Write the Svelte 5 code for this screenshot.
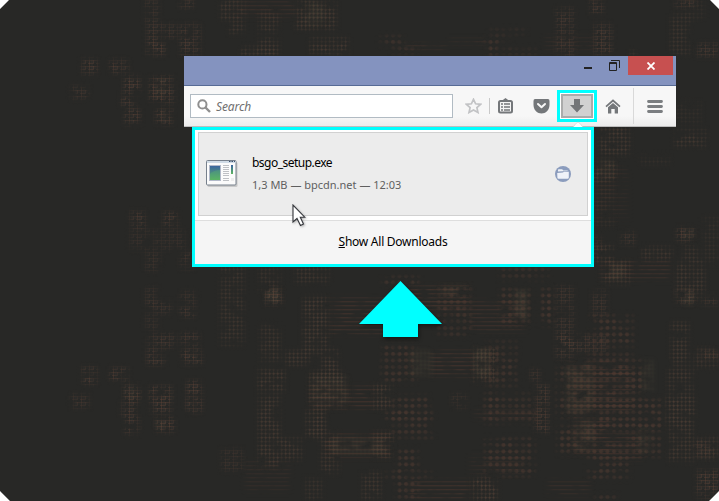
<script>
  // Each patch: x, y, width, height, opacity
  const mesh = [
    [82,59,15,15,.75],[110,60,18,13,.75],[124,76,16,18,.8],[71,86,18,13,.5],[121,92,14,14,.7],[125,109,15,16,.8],
    [150,77,24,26,.8],[156,109,17,15,.85],[145,0,14,23,.5],[180,0,13,8,.8],[147,24,29,14,.6],[147,39,18,16,.8],[180,24,20,31,.7],
    [130,211,15,18,.7],[163,212,15,15,.7],[130,230,55,20,.35],[145,252,15,19,.4],[180,252,14,17,.5],
    [145,287,13,18,.4],[147,301,25,13,.45],[180,291,16,12,.4],[180,304,15,13,.7],[145,316,13,14,.4],
    [147,334,28,14,.6],[147,350,18,15,.7],[181,333,18,14,.65],[182,350,20,14,.8],
    [82,367,15,17,.75],[110,368,18,13,.75],[71,394,18,14,.5],[124,385,16,18,.8],[121,402,14,14,.7],[125,417,14,17,.8],
    [150,386,22,26,.8],[156,417,18,15,.85],[186,381,16,31,.75],[221,449,22,22,.4],
    [265,289,17,16,.9],[556,286,18,73,.5],[592,290,15,27,.5],[535,385,14,48,.7],[557,335,50,17,.6],
    [530,369,10,12,.5],[452,394,15,14,.5],[676,290,19,14,.8],[697,470,22,28,.8],[702,295,17,10,.5],
    [677,227,17,14,.8],[621,232,14,13,.55],[590,0,13,15,.7],[594,24,18,30,.7],[697,43,22,14,.6],
    [675,0,20,7,.7],[590,237,13,14,.4],[694,440,20,17,.5],[697,350,22,10,.5],[556,8,18,48,.6]
  ];
  const fine = [
    [220,262,24,84,.55],[259,267,22,25,.5],[295,260,34,23,.6],[303,297,25,56,.75],[260,324,20,38,.6],
    [258,369,27,22,.75],[285,350,25,16,.65],[320,349,18,30,.75],[309,372,36,36,.8],[258,395,22,72,.7],[280,438,22,22,.7],
    [306,409,20,29,.8],[321,432,18,42,.7],[362,472,19,28,.6],[305,478,18,23,.45],
    [671,322,18,45,.65],[694,348,24,20,.5],[668,369,26,22,.65],[669,394,24,69,.65],[697,437,21,22,.65],[665,396,30,27,.5],
    [670,14,20,41,.5],[686,0,18,20,.3],[676,101,25,23,.3],[675,130,32,17,.65],[600,127,30,28,.75],[683,245,15,15,.5],
    [593,245,20,17,.75],[642,247,30,13,.65],[592,161,24,21,.85],[640,155,30,10,.3],[594,185,20,42,.35],
    [676,260,29,38,.65],[603,260,27,24,.8],[373,384,20,25,.8],[373,432,20,26,.8],[473,348,25,34,.85],[472,477,25,24,.9],
    [703,217,16,50,.35],[220,0,25,20,.7],[229,22,15,12,.6],[259,12,20,43,.6],[296,0,40,30,.75],[241,47,34,9,.7],[310,38,38,18,.75],[630,51,5,5,.8]
  ];
  const dots = [
    [382,277,37,7,.8],[382,345,34,37,.75],[391,396,38,36,.7],[384,412,49,8,.7],[396,422,26,10,.7],[396,434,37,4,.8],
    [396,448,22,52,.7],[383,472,49,6,.7],[500,288,18,37,.75],[519,290,12,34,.75],[541,288,12,37,.85],[437,286,34,50,.65],
    [485,341,32,45,.65],[484,392,19,31,.8],[505,393,31,30,.55],[485,438,50,38,.75],[590,315,43,32,.75],[589,353,43,24,.7],
    [590,400,42,31,.8],[612,360,32,42,.8],[628,399,34,30,.8],[557,365,54,52,.7],[588,443,41,36,.7],[595,495,23,6,.7],
    [380,36,24,10,.6],[392,47,26,6,.5],[484,37,26,5,.8],[490,29,36,5,.5],[488,43,9,12,.8],[502,48,34,6,.5],[500,267,48,13,.5],[558,425,40,29,.75],[628,425,33,32,.7]
  ];
  const lines = [
    [600,260,70,20,.6],[330,297,60,38,.7],[310,385,64,24,.7],[326,433,65,25,.75],[409,285,60,27,.8],[430,350,45,27,.7],
    [470,300,55,32,.6],[475,410,63,9,.5],[570,360,62,52,.75],[572,418,38,36,.8],[602,433,40,27,.6],[470,455,54,20,.3],
    [548,480,42,16,.45],[410,480,60,20,.7],[245,460,45,32,.35],[406,44,40,5,.7],[450,39,35,5,.6],[235,0,60,18,.5],[545,35,50,16,.3],[594,167,34,55,.3]
  ];
  const glow = [
    [266,289,14,14,.5],[312,376,36,30,.3],[331,438,56,16,.4],[410,350,22,26,.4],[440,286,26,10,.3],[515,288,12,32,.5],
    [565,364,28,50,.4],[574,420,20,30,.4],[642,360,12,34,.4],[638,428,14,24,.4],[609,263,15,17,.4],[474,348,16,28,.5],
    [682,291,11,13,.5],[598,160,16,18,.3],[156,79,10,17,.3],[160,112,9,9,.4],[127,386,9,12,.3],[156,420,11,9,.3],[684,229,9,10,.4],[306,3,18,22,.35]
  ];
  const layers = [
    ['mesh', mesh], ['fine', fine], ['dots', dots], ['lines', lines], ['glow', glow]
  ];
</script>

<div class="stage">
  <svg class="texture" width="719" height="501" aria-hidden="true">
    <defs>
      <filter id="soft" x="0" y="0" width="719" height="501" filterUnits="userSpaceOnUse" color-interpolation-filters="sRGB">
        <feGaussianBlur in="SourceGraphic" stdDeviation="2.8" result="blur" />
        <feTurbulence type="fractalNoise" baseFrequency=".07 .1" numOctaves="2" seed="6" />
        <feColorMatrix values="0 0 0 0 1  0 0 0 0 1  0 0 0 0 1  3 0 0 0 -.65" result="noise" />
        <feComposite in="blur" in2="noise" operator="in" />
      </filter>
      <pattern id="p-mesh" width="8" height="6" patternUnits="userSpaceOnUse"><path d="M0 .5H8M0 3.5H5M1.5 0V6M5.5 0V4" stroke="#6b483b" stroke-opacity=".48" /><path d="M0 2h8M4 0v6" stroke="#51453b" stroke-opacity=".35" /></pattern>
      <pattern id="p-fine" width="4" height="4" patternUnits="userSpaceOnUse"><path d="M0 1.5H4M1.5 0V4" stroke="#5b4b3d" stroke-opacity=".28" /><rect x=".7" y=".7" width="2" height="2" fill="#5b4035" fill-opacity=".62" /></pattern>
      <pattern id="p-dots" width="6.5" height="6.5" patternUnits="userSpaceOnUse"><circle cx="3" cy="3" r="2" fill="#48362f" /><path d="M0 3H6.5" stroke="#4b382f" stroke-opacity=".3" /></pattern>
      <pattern id="p-lines" width="9" height="4" patternUnits="userSpaceOnUse"><path d="M0 1.5H9" stroke="#55392f" stroke-opacity=".65" /><path d="M0 2.5H9" stroke="#483a30" stroke-opacity=".35" /></pattern>
      <pattern id="p-glow" width="4" height="4" patternUnits="userSpaceOnUse"><path d="M0 0H4V4H0Z" fill="#5b4d40" fill-opacity=".3" /><path d="M0 1H4M1 0V4" stroke="#626249" stroke-opacity=".25" /></pattern>
      {#each layers as [name, patches]}
        <mask id="m-{name}" maskUnits="userSpaceOnUse" x="0" y="0" width="719" height="501">
          <g filter="url(#soft)">
            {#each patches as [x, y, w, h, o]}
              <rect {x} {y} width={w} height={h} fill="#fff" opacity={o} />
            {/each}
          </g>
        </mask>
      {/each}
    </defs>
    <rect width="719" height="501" fill="#282826" />
    {#each layers as [name]}
      <rect width="719" height="501" fill="url(#p-{name})" mask="url(#m-{name})" />
    {/each}
    <path d="M0 0H9L0 9ZM719 0H710L719 9ZM0 501V491L10 501ZM719 501V491L709 501Z" fill="#fff" />
  </svg>

  <div class="window">
    <div class="titlebar">
      <svg class="min" width="8" height="2"><path d="M0 0H8V2H0Z" fill="#222" /></svg>
      <svg class="restore" width="11" height="11" fill="none" stroke="#222"><path d="M2 .5H10.5V8M.5 2.5H7.5V10.5H.5ZM.5 3.5H7.5" /></svg>
      <div class="close"><svg width="8" height="8"><path d="M.5 .5L7.5 7.5M7.5 .5L.5 7.5" stroke="#fff" stroke-width="1.8" /></svg></div>
    </div>
    <div class="toolbar">
      <div class="search">
        <svg width="15" height="15" fill="none" stroke="#8f8f8f"><circle cx="5.4" cy="5.4" r="4.1" stroke-width="2" /><path d="M8.5 8.5L13 13" stroke-width="2.4" /></svg>
        <span>Search</span>
      </div>
      <svg class="star" width="17" height="16"><path d="M8.5 1.3L10.6 5.8L15.6 6.3L11.9 9.6L13 14.5L8.5 12L4 14.5L5.1 9.6L1.4 6.3L6.4 5.8Z" fill="none" stroke="#c2c3c5" stroke-width="1.7" /></svg>
      <i class="short"></i>
      <svg class="list" width="15" height="16"><path d="M3.5 3L7.5 0L11.5 3Z" fill="#74777a" /><rect x="1" y="3" width="13" height="11.5" rx="1.5" fill="#f5f5f5" stroke="#74777a" stroke-width="2" /><path d="M3 6H5M6 6H12M3 9H5M6 9H12M3 12H5M6 12H12" stroke="#74777a" stroke-width="1.3" /></svg>
      <svg class="pocket" width="17" height="15"><path d="M2 0H15Q16.5 0 16.5 2V6C16.5 11 12.5 14.5 8.5 14.5S.5 11 .5 6V2Q.5 0 2 0Z" fill="#74777a" /><path d="M5 5L8.5 8.3L12 5" fill="none" stroke="#f8f8f8" stroke-width="2" stroke-linecap="round" stroke-linejoin="round" /></svg>
      <div class="mark"><div class="dl"><svg width="14" height="14"><path d="M4 0H10V6H14L7 13.5L0 6H4Z" fill="#737577" /></svg></div></div>
      <svg class="home" width="16" height="15"><path d="M1 7.6L8 1.5L15 7.6" fill="none" stroke="#74777a" stroke-width="1.7" /><path d="M3 8.3L8 4L13 8.3V14.5H9.7V10H6.3V14.5H3Z" fill="#74777a" /></svg>
      <i class="long"></i>
      <svg class="menu" width="16" height="13"><path d="M1.5 1.5H14.5M1.5 6.5H14.5M1.5 11.5H14.5" stroke="#7b7e81" stroke-width="2.8" stroke-linecap="round" /></svg>
    </div>
  </div>

  <div class="panel">
    <svg class="caret" width="20" height="9"><path d="M2 9C5 8 7 2 10 1C13 2 15 8 18 9Z" fill="#fff" stroke="#ccc" stroke-width=".6" /></svg>
    <div class="item">
      <svg class="file" width="32" height="28">
        <rect x="1.5" y="2" width="30" height="25" rx="1.5" fill="#777" opacity=".3" />
        <rect x=".5" y=".5" width="29.5" height="24.5" rx="1" fill="#fbfbfb" stroke="#77808c" />
        <path d="M1 1H29.5V3H1Z" fill="#d0dbe6" />
        <path d="M23 1.5H24.5M25.5 1.5H27M28 1.5H29" stroke="#3c526d" />
        <rect x="3.5" y="5.5" width="11" height="15" fill="url(#pic)" stroke="#b2b9c9" />
        <path d="M4 14Q8 10 14 10V20H4Z" fill="#5ab86b" opacity=".35" />
        <path d="M17 5.5H23M17 7.5H23M17 9.5H23M17 11.5H23M17 13.5H23M17 15.5H23M17 18.5H23M17 20.5H23" stroke="#bfc1c5" />
        <path d="M25 5H27V14H25Z" fill="url(#pic)" />
        <path d="M25 18H28V21H25Z" fill="#eeeeee" />
        <defs><linearGradient id="pic" x2="0" y2="1"><stop stop-color="#3b64a2" /><stop offset="1" stop-color="#5db65e" /></linearGradient></defs>
      </svg>
      <div class="info"><div class="name">bsgo_setup.exe</div><div class="meta">1,3 MB — bpcdn.net — 12:03</div></div>
      <svg class="folder" width="16" height="16"><circle cx="8" cy="8" r="8" fill="#8b9cbd" /><path d="M3 5.6V3.8Q3 3.2 3.6 3.2H7.2L8.3 4.4H12.2Q13 4.4 13 5Z" fill="#eef1f6" /><path d="M2.2 7L7.8 6.6L9.2 5.8H13.8V11.8Q13.6 12.8 12.6 12.8H3.4Q2.5 12.8 2.4 11.8Z" fill="#eff2f9" /></svg>
    </div>
    <div class="footer"><span><u>S</u>how All Downloads</span></div>
  </div>

  <svg class="arrow" width="83" height="57" viewBox="0 0 83 57"><path d="M41.5 0L83 43H59V56H24V43H0Z" fill="#0ff" /></svg>
  <svg class="cursor" width="14" height="23"><path d="M1 1V18L5 14.5L8.5 21.5L11.5 20L8.3 13.2H12.8Z" fill="#fff" stroke="#34363b" stroke-width="1.1" /></svg>
</div>

<style>
  :global(body) { margin: 0; }
  .stage { position: relative; box-sizing: border-box; width: 719px; height: 501px; padding: 56px 43px 0 184px; overflow: hidden; font: 12px "Noto Sans", "Open Sans", sans-serif; }
  .stage svg { display: block; flex: none; }
  .texture { position: absolute; inset: 0; }
  .window { position: relative; width: 492px; }
  .titlebar { box-sizing: border-box; height: 30px; display: flex; justify-content: flex-end; align-items: flex-start; padding-right: 3px; background: #8493bf; border-bottom: 1px solid #576b95; }
  .min { margin: 11px 17px 0 0; }
  .restore { margin: 4px 8px 0 0; }
  .close { width: 45px; height: 19px; background: #c75050; display: flex; align-items: center; justify-content: center; }
  .toolbar { box-sizing: border-box; height: 41px; display: flex; align-items: center; padding: 0 13px 0 6px; background: linear-gradient(#f7f7f7 75%, #ececec); border-bottom: 1px solid #bdbdbd; }
  .search { box-sizing: border-box; width: 263px; height: 24px; display: flex; align-items: center; padding-left: 6px; border: 1px solid #b1bbc3; background: #fff; color: #707070; font-style: italic; }
  .search span { margin-left: 4px; letter-spacing: -.1px; }
  .star { margin-left: 12px; }
  .short { width: 1px; height: 16px; background: #c9c9c9; margin-left: 7px; }
  .list { margin-left: 8px; }
  .pocket { margin-left: 20px; }
  .mark { box-sizing: border-box; width: 40px; height: 32px; margin-left: 7px; padding: 1px; border: 3px solid #0ff; background: #fff; }
  .dl { box-sizing: border-box; width: 32px; height: 24px; display: flex; align-items: center; justify-content: center; border: 2px solid #ababab; background: #d1d1d1; }
  .home { margin-left: 8px; }
  .long { width: 1px; height: 36px; margin-left: 12px; background: #d9d9d9; }
  .menu { margin-left: auto; }
  .panel { position: relative; box-sizing: border-box; width: 402px; height: 140px; margin-left: 8px; border: 3px solid #0ff; background: #fff; display: flex; flex-direction: column; }
  .caret { position: absolute; left: 373px; top: -9px; clip-path: inset(0 0 3px); }
  .item { box-sizing: border-box; height: 84px; margin: 2px 3px 4px; border: 1px solid #d1d1d1; background: #ececec; display: flex; align-items: center; padding: 0 16px 0 7px; }
  .info { margin-left: 14px; margin-right: auto; padding-bottom: 1px; line-height: 22px; white-space: nowrap; }
  .name { color: #000; letter-spacing: -.52px; }
  .meta { color: #5f5f5f; font-size: 11px; }
  .footer { flex: 1; box-sizing: border-box; padding-bottom: 2px; border-top: 1px solid #dedede; background: #f5f5f5; display: flex; align-items: center; justify-content: center; color: #000; letter-spacing: -.25px; }
  .arrow { margin: 14px 0 0 175px; filter: drop-shadow(1px 2px 2px #0007); }
  .cursor { position: absolute; left: 292px; top: 204px; filter: drop-shadow(1px 1px 1px #0004); }
</style>
